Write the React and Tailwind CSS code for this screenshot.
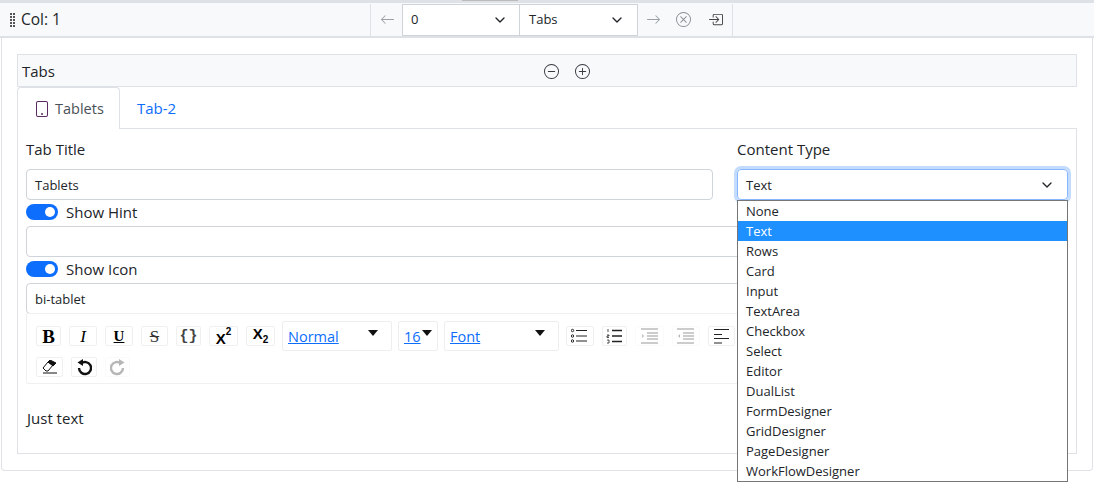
import React from 'react';
import { ChevronDown } from 'lucide-react';
import {
  BsArrowLeft,
  BsArrowRight,
  BsBoxArrowInRight,
  BsDashCircle,
  BsPlusCircle,
  BsTablet,
  BsXCircle,
} from 'react-icons/bs';

const options = [
  'None', 'Text', 'Rows', 'Card', 'Input', 'TextArea', 'Checkbox', 'Select',
  'Editor', 'DualList', 'FormDesigner', 'GridDesigner', 'PageDesigner', 'WorkFlowDesigner',
];

function Grip() {
  const dots = [];
  for (let y = 0; y < 5; y++) {
    dots.push(<rect key={`a${y}`} x="0" y={y * 3} width="2" height="2" />);
    dots.push(<rect key={`b${y}`} x="3" y={y * 3} width="2" height="2" />);
  }
  return (
    <svg width="5" height="14" viewBox="0 0 5 14" fill="#555" className="shrink-0">
      {dots}
    </svg>
  );
}

function Toggle() {
  return (
    <span className="flex h-4 w-8 shrink-0 items-center justify-end rounded-full bg-[#0d6efd] pr-[3px]">
      <span className="h-[10px] w-[10px] rounded-full bg-white" />
    </span>
  );
}

function ToolBtn({ w, disabled, children }) {
  return (
    <span
      className={`flex h-[20px] shrink-0 items-center justify-center rounded-[2px] border border-[#f0f0f0] bg-white text-black ${w} ${disabled ? 'opacity-30' : ''}`}
    >
      {children}
    </span>
  );
}

function Caret() {
  return (
    <svg width="12" height="6" viewBox="0 0 12 6" className="shrink-0">
      <path d="M1 0h10L6 6z" fill="#111" />
    </svg>
  );
}

function ToolSelect({ w, label, narrow }) {
  return (
    <span
      className={`flex h-[30px] shrink-0 items-start justify-between rounded-[2px] border border-[#eeeeee] bg-white pl-[5px] ${narrow ? 'pr-[4px]' : 'pr-[12px]'} pt-[7px] ${w}`}
    >
      <span className="text-[14.500px] leading-[16px] text-[#0d6efd] underline">{label}</span>
      <span className="mt-[1px]"><Caret /></span>
    </span>
  );
}

function ListIcon({ kind }) {
  return (
    <svg width="18" height="16" viewBox="0 0 18 16" stroke="#222" strokeWidth="1" fill="none">
      {kind === 'ul' && (
        <>
          <circle cx="1.500" cy="2.500" r="1.200" />
          <circle cx="1.500" cy="8" r="1.200" />
          <circle cx="1.500" cy="13" r="1.200" />
          <path d="M5 2.500h11M5 8h11M5 13h11" />
        </>
      )}
      {kind === 'ol' && (
        <>
          <path d="M2 1v3M1 7h2v1H1v1.500h2M1 12h2v3H1" strokeWidth="0.8" />
          <path d="M6 2.500h10M6 8h10M6 13.500h10" strokeWidth="1.500" />
        </>
      )}
      {kind === 'in' && (
        <>
          <path d="M0 1h17M6 5h11M6 8h11M6 11h11M0 15h17" strokeWidth="1.400" />
          <path d="M1 6l2 2-2 2z" fill="#222" stroke="none" />
        </>
      )}
      {kind === 'out' && (
        <>
          <path d="M0 1h17M6 5h11M6 8h11M6 11h11M0 15h17" strokeWidth="1.400" />
          <path d="M3 6L1 8l2 2z" fill="#222" stroke="none" />
        </>
      )}
      {kind === 'left' && <path d="M1 1.500h15M1 6.500h8M1 10.500h15M1 15h8" />}
    </svg>
  );
}

export default function App() {
  return (
    <div className="relative h-[482px] w-[1094px] overflow-hidden bg-white font-['Open_Sans',sans-serif] text-[15px] text-[#212529]">
      <div className="relative h-[38px] border-t-[3px] border-b-[2px] border-[#dee2e6] bg-[#f8f9fa]">
        <div className="absolute left-[462px] top-[-3px] h-[1px] w-[56px] bg-[#bbbbbb]" />
        <div className="flex h-full items-center pl-[10px]">
          <Grip />
          <span className="ml-[6px] w-[349px] pt-[1px] text-[15.500px]">Col: 1</span>
          <div className="flex h-[32px] items-stretch border-x border-[#dee2e6]">
            <span className="flex w-[31px] items-center justify-center pl-[2px] text-[#9aa0a6]">
              <BsArrowLeft size={15} />
            </span>
            <div className="flex w-[118px] items-center justify-between border border-[#ced4da] bg-white pl-[8px] pr-[11px] pt-[1px] text-[13px]">
              0
              <ChevronDown size={16} strokeWidth={2} />
            </div>
            <div className="flex w-[118px] items-center justify-between border-y border-r border-[#ced4da] bg-white pl-[9px] pr-[12px] pt-[1px] text-[13px]">
              Tabs
              <ChevronDown size={16} strokeWidth={2} />
            </div>
            <span className="flex w-[31px] items-center justify-center text-[#9aa0a6]">
              <BsArrowRight size={15} />
            </span>
            <span className="flex w-[29px] items-center justify-center text-[#8a9096]">
              <BsXCircle size={15} />
            </span>
            <span className="flex w-[34px] items-center justify-center text-[#444]">
              <BsBoxArrowInRight size={15} />
            </span>
          </div>
        </div>
      </div>

      <div className="mx-[1px] h-[433px] rounded-b-[4px] border-x border-b border-[#dee2e6] px-[15px] pt-[16px]">
        <div className="flex h-[33px] items-center border border-[#dee2e6] bg-[#f8f9fa] pl-[4px] pt-[1px]">
          <span className="w-[522px]">Tabs</span>
          <BsDashCircle size={15} className="text-[#343a40]" />
          <BsPlusCircle size={15} className="ml-[16px] text-[#343a40]" />
        </div>

        <div className="flex h-[41px]">
          <div className="relative z-10 flex h-[42px] w-[103px] items-center gap-[5px] rounded-t-[4px] border-x border-t border-[#dee2e6] bg-white pl-[16px] text-[14.500px] text-[#495057]">
            <BsTablet size={16} className="text-[#5b2a5e]" />
            Tablets
          </div>
          <div className="flex items-center pl-[17px] pt-[2px] text-[#0d6efd]">Tab-2</div>
        </div>

        <div className="h-[326px] border border-[#dee2e6] px-[8px]">
          <div className="flex gap-[24px]">
            <div className="w-[687px]">
              <div className="flex h-[40px] items-end pb-[10px] leading-[20px]">Tab Title</div>
              <div className="flex h-[31px] items-center rounded-[4px] border border-[#ced4da] pl-[8px] pt-[2px] text-[13px]">
                Tablets
              </div>
            </div>
            <div className="w-[331px]">
              <div className="flex h-[40px] items-end pb-[10px] leading-[20px]">Content Type</div>
              <div className="flex h-[31px] items-center justify-between rounded-[4px] border border-[#86b7fe] pl-[8px] pr-[12px] pt-[1px] text-[13px] shadow-[0_0_0_3px_#c2dbfe]">
                <span className="pt-[1px]">Text</span>
                <ChevronDown size={16} strokeWidth={2} />
              </div>
            </div>
          </div>

          <div className="mb-[2px] flex h-[24px] items-center gap-[8px]">
            <Toggle />
            Show Hint
          </div>
          <div className="h-[31px] w-[1042px] rounded-[4px] border border-[#ced4da]" />
          <div className="mb-[2px] flex h-[24px] items-center gap-[8px]">
            <Toggle />
            Show Icon
          </div>
          <div className="flex h-[31px] w-[1042px] items-center rounded-[4px] border border-[#ced4da] pl-[8px] pt-[2px] text-[13px]">
            bi-tablet
          </div>

          <div className="mt-[-1px] h-[71px] w-[1042px] rounded-[2px] border border-[#f0f0f0] pl-[9px] pt-[7px]">
            <div className="flex items-start">
              <div className="mt-[5px] flex gap-[8px]">
                <ToolBtn w="w-[25px]"><span className="font-['Liberation_Serif',serif] text-[19px] font-bold leading-none">B</span></ToolBtn>
                <ToolBtn w="w-[28px]"><span className="font-['Liberation_Serif',serif] text-[17px] italic leading-none">I</span></ToolBtn>
                <ToolBtn w="w-[28px]"><span className="font-['Liberation_Serif',serif] text-[15px] font-bold leading-none underline">U</span></ToolBtn>
                <ToolBtn w="w-[27px]"><span className="font-['Liberation_Serif',serif] text-[17px] leading-none text-[#333] line-through">S</span></ToolBtn>
              </div>
              <div className="ml-[8px] mt-[5px] flex gap-[8px]">
                <ToolBtn w="w-[25px]"><span className="font-['Liberation_Mono',monospace] text-[15px] font-bold leading-none text-[#444]">{'{}'}</span></ToolBtn>
                <ToolBtn w="w-[29px]">
                  <span className="flex items-start font-['Liberation_Sans',sans-serif] font-bold">
                    <span className="mt-[5px] text-[15px] leading-[14px]">X</span>
                    <span className="text-[10px] leading-[10px]">2</span>
                  </span>
                </ToolBtn>
                <ToolBtn w="w-[29px]">
                  <span className="flex items-end font-['Liberation_Sans',sans-serif] font-bold">
                    <span className="mb-[4px] text-[15px] leading-[14px]">X</span>
                    <span className="text-[10px] leading-[10px]">2</span>
                  </span>
                </ToolBtn>
              </div>
              <div className="ml-[7px] flex gap-[6px]">
                <ToolSelect w="w-[110px]" label="Normal" />
                <ToolSelect w="w-[40px]" label="16" narrow />
                <ToolSelect w="w-[115px]" label="Font" />
              </div>
              <div className="ml-[7px] mt-[5px] flex gap-[8px]">
                <ToolBtn w="w-[28px]"><ListIcon kind="ul" /></ToolBtn>
                <ToolBtn w="w-[25px]"><ListIcon kind="ol" /></ToolBtn>
                <ToolBtn w="w-[29px]" disabled><ListIcon kind="in" /></ToolBtn>
                <ToolBtn w="w-[28px]" disabled><ListIcon kind="out" /></ToolBtn>
                <ToolBtn w="w-[27px]"><ListIcon kind="left" /></ToolBtn>
              </div>
            </div>
            <div className="mt-[6px] flex gap-[8px]">
              <ToolBtn w="w-[27px]">
                <svg width="16" height="14" viewBox="0 0 16 14" stroke="#111" fill="none" strokeWidth="1">
                  <path d="M1 8l5-6 5 3-5 6H4z" fill="#fff" />
                  <path d="M6 2l2-2 6 3-3 3z" fill="#111" />
                  <path d="M1 13h14" />
                </svg>
              </ToolBtn>
              <ToolBtn w="w-[26px]">
                <svg width="16" height="18" viewBox="0 0 16 18" fill="none" stroke="#111" strokeWidth="2.400">
                  <path d="M5 5.500A6 6 0 1 1 3 10" />
                  <path d="M7 1v7L1.500 4.500z" fill="#111" stroke="none" />
                </svg>
              </ToolBtn>
              <ToolBtn w="w-[25px]" disabled>
                <svg width="16" height="18" viewBox="0 0 16 18" fill="none" stroke="#111" strokeWidth="2.400">
                  <path d="M11 5.500A6 6 0 1 0 13 10" />
                  <path d="M9 1v7l5.500-3.500z" fill="#111" stroke="none" />
                </svg>
              </ToolBtn>
            </div>
          </div>

          <div className="ml-[1px] mt-[24px] leading-[20px]">Just text</div>
        </div>
      </div>

      <ul className="absolute left-[737px] top-[200px] h-[282px] w-[331px] border border-[#767676] bg-white text-[13px] text-[#212529]">
        {options.map((o) => (
          <li
            key={o}
            className={`flex h-[20px] items-center pl-[8px] pt-[1px] ${o === 'Text' ? 'bg-[#1e90ff] text-white' : ''}`}
          >
            {o}
          </li>
        ))}
      </ul>
    </div>
  );
}
